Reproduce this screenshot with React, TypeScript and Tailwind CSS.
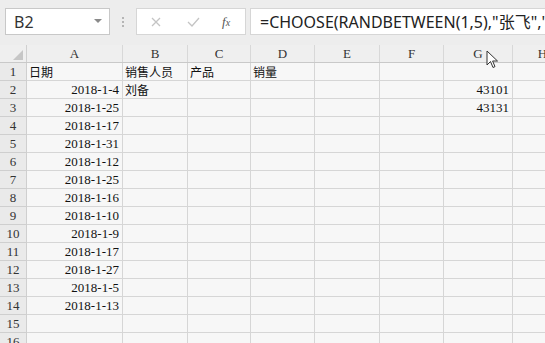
import React from "react";

const cols = [
  { k: "A", w: 96 },
  { k: "B", w: 65 },
  { k: "C", w: 63 },
  { k: "D", w: 64 },
  { k: "E", w: 65 },
  { k: "F", w: 64 },
  { k: "G", w: 69 },
  { k: "H", w: 60 },
];

const dates = [
  "2018-1-4",
  "2018-1-25",
  "2018-1-17",
  "2018-1-31",
  "2018-1-12",
  "2018-1-25",
  "2018-1-16",
  "2018-1-10",
  "2018-1-9",
  "2018-1-17",
  "2018-1-27",
  "2018-1-5",
  "2018-1-13",
];

const serif = { fontFamily: '"Liberation Serif", "Noto Sans CJK SC", serif' };
const cjk = { fontFamily: '"Noto Sans CJK SC", sans-serif' };

function cellFor(row: number, col: string): React.ReactNode {
  if (row === 1) {
    const head: Record<string, string> = { A: "日期", B: "销售人员", C: "产品", D: "销量" };
    if (head[col]) return <span className="pl-[2px] text-[12px]" style={cjk}>{head[col]}</span>;
  }
  if (col === "A" && row >= 2 && row <= 14) {
    return <span className="ml-auto pr-[3px] text-[13px]" style={serif}>{dates[row - 2]}</span>;
  }
  if (col === "B" && row === 2) return <span className="pl-[2px] text-[12px]" style={cjk}>刘备</span>;
  if (col === "G" && row === 2) return <span className="ml-auto pr-[3px] text-[13px]" style={serif}>43101</span>;
  if (col === "G" && row === 3) return <span className="ml-auto pr-[3px] text-[13px]" style={serif}>43131</span>;
  return null;
}

const App = () => {
  const rows = Array.from({ length: 16 }, (_, i) => i + 1);
  return (
    <div className="relative w-[545px] h-[343px] overflow-hidden bg-[#f7f7f7] text-[#222]">
      {/* toolbar */}
      <div className="flex items-center h-[45px] bg-[#ededed] pl-[5px] pb-[2px]">
        <div className="flex items-center w-[105px] h-[27px] bg-white border border-[#c8c8c8]">
          <span className="pl-[8px] text-[16px] text-[#333]" style={{ fontFamily: '"Noto Sans", sans-serif' }}>B2</span>
          <svg className="ml-auto mr-[7px]" width="8" height="5" viewBox="0 0 8 5">
            <path d="M0 0 L8 0 L4 4 Z" fill="#8a8a8a" />
          </svg>
        </div>
        <div className="flex flex-col gap-[2px] mx-[12px]">
          <span className="w-[2px] h-[2px] bg-[#b5b5b5]" />
          <span className="w-[2px] h-[2px] bg-[#b5b5b5]" />
          <span className="w-[2px] h-[2px] bg-[#b5b5b5]" />
        </div>
        <div className="flex items-center w-[110px] h-[27px] bg-white border border-[#d6d6d6]">
          <svg className="ml-[14px]" width="10" height="10" viewBox="0 0 10 10">
            <path d="M1 1 L9 9 M9 1 L1 9" stroke="#c4c4c4" strokeWidth="1.3" />
          </svg>
          <svg className="ml-[26px]" width="13" height="10" viewBox="0 0 13 10">
            <path d="M1 5 L5 9 L12 1" stroke="#c4c4c4" strokeWidth="1.3" fill="none" />
          </svg>
          <span className="ml-[22px] text-[13px] italic text-[#555]" style={{ fontFamily: '"Liberation Serif", serif' }}>
            f<span className="text-[10px]">x</span>
          </span>
        </div>
        <div className="flex items-center flex-1 h-[27px] ml-[4px] bg-white border-y border-l border-[#d6d6d6] overflow-hidden whitespace-nowrap">
          <span className="pl-[9px] text-[16px] text-[#222]" style={{ fontFamily: '"Noto Sans", "Noto Sans CJK SC", sans-serif' }}>
            =CHOOSE(RANDBETWEEN(1,5),"张飞","关羽","刘备")
          </span>
        </div>
      </div>

      {/* column headers */}
      <div className="flex h-[18px] bg-[#efefef] border-b border-[#c9c9c9]">
        <div className="relative w-[27px] shrink-0 border-r border-[#d0d0d0]">
          <svg className="absolute right-[3px] bottom-[2px]" width="10" height="10" viewBox="0 0 10 10">
            <path d="M10 0 L10 10 L0 10 Z" fill="#c6c6c6" />
          </svg>
        </div>
        {cols.map((c) => (
          <div
            key={c.k}
            className="flex items-center justify-center shrink-0 border-r border-[#d8d8d8] text-[13px] text-[#333]"
            style={{ width: c.w, ...serif }}
          >
            {c.k}
          </div>
        ))}
      </div>

      {/* rows */}
      {rows.map((r) => (
        <div key={r} className="flex h-[18px]">
          <div
            className="flex items-center justify-center w-[27px] shrink-0 bg-[#eaeaea] border-r border-b border-[#cfcfcf] text-[13px] text-[#333]"
            style={serif}
          >
            {r}
          </div>
          {cols.map((c) => (
            <div
              key={c.k}
              className="flex items-center shrink-0 border-r border-b border-[#d6d6d6] leading-none text-[#111]"
              style={{ width: c.w }}
            >
              {cellFor(r, c.k)}
            </div>
          ))}
        </div>
      ))}

      {/* mouse pointer */}
      <svg className="absolute left-[486px] top-[50px]" width="13" height="20" viewBox="0 0 13 20">
        <path d="M1 1 L1 15 L4.5 11.5 L7 17.5 L9 16.6 L6.6 11 L11.5 11 Z" fill="#fff" stroke="#333" strokeWidth="1" />
      </svg>
    </div>
  );
};

export default App;
